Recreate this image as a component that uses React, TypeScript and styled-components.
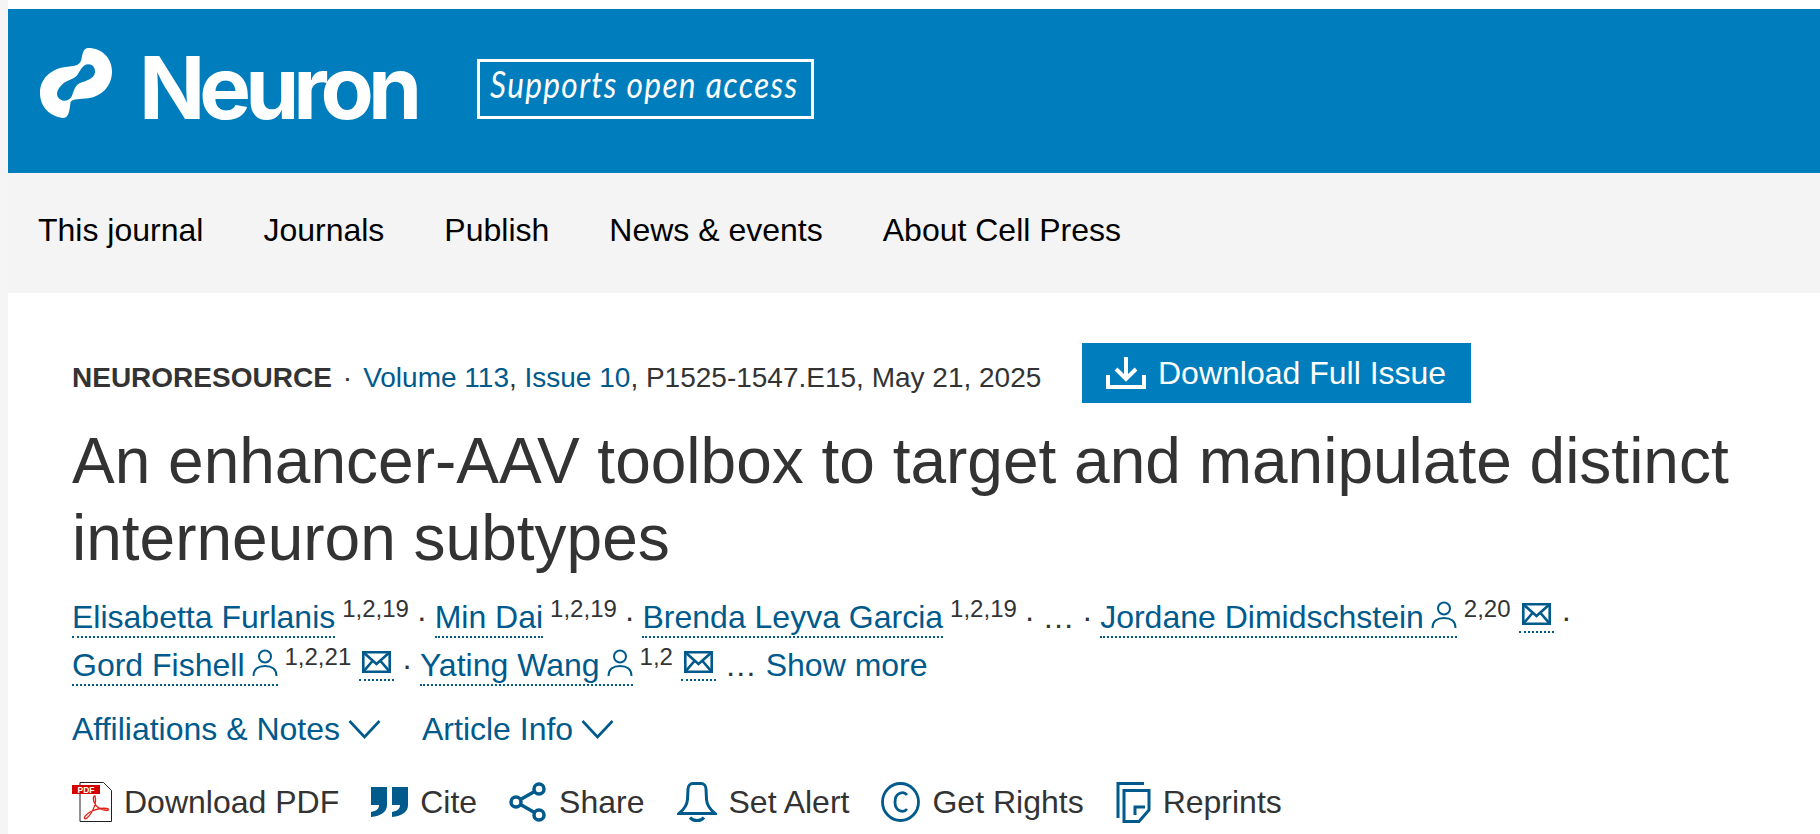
import React, { FC, ReactNode } from "react";
import styled, { createGlobalStyle } from "styled-components";

const Colors = {
  BRAND: "#007dbc",
  LINK: "#005a8c",
  TEXT: "#333333",
  NAV: "#f4f4f4"
};

const GlobalStyle = createGlobalStyle`
  html, body {
    margin: 0;
    padding: 0;
    background: #ffffff;
  }
  body {
    font-family: "Liberation Sans", Arial, sans-serif;
    color: ${Colors.TEXT};
  }
`;

const Page = styled.div`
  width: 1820px;
  height: 834px;
  box-sizing: border-box;
  overflow: hidden;
  padding: 9px 0 0 8px;
  background: linear-gradient(to right, #f5f5f5 8px, #ffffff 8px);
`;

const Masthead = styled.header`
  height: 164px;
  background: ${Colors.BRAND};
  display: flex;
  align-items: flex-start;
  padding: 39px 0 0 32px;
  box-sizing: border-box;
`;

const LogoLink = styled.a`
  display: flex;
  align-items: flex-start;
  color: #ffffff;
  text-decoration: none;
  width: 437px;
  height: 78px;
  flex-shrink: 0;
`;

const LogoText = styled.span`
  font-family: "Inter", "Liberation Sans", sans-serif;
  font-size: 87px;
  font-weight: 700;
  letter-spacing: -6px;
  line-height: 78px;
  margin: 1px 0 0 27px;
`;

const OpenAccess = styled.div`
  box-sizing: border-box;
  width: 337px;
  height: 60px;
  margin-top: 11px;
  border: 3px solid #ffffff;
  color: #ffffff;
  display: flex;
  justify-content: center;
  white-space: nowrap;
`;

const OpenAccessText = styled.span`
  font-family: "Lato", sans-serif;
  font-style: italic;
  font-size: 36px;
  letter-spacing: 1.5px;
  line-height: 44px;
  transform: translateX(-1px) scaleX(0.88);
`;

const NavBar = styled.nav`
  height: 120px;
  box-sizing: border-box;
  padding: 0 0 6px 30px;
  background: ${Colors.NAV};
  display: flex;
  align-items: center;
  gap: 60px;
`;

const NavLink = styled.a`
  color: #000000;
  font-size: 32px;
  text-decoration: none;
  white-space: nowrap;
`;

const Main = styled.main`
  padding: 50px 72px 0 64px;
`;

const MetaRow = styled.div`
  display: flex;
  align-items: flex-start;
  height: 60px;
`;

const MetaText = styled.div`
  font-size: 28px;
  line-height: 30px;
  padding-top: 20px;
  width: 1010px;
  white-space: nowrap;
`;

const ArticleType = styled.span`
  font-weight: 700;
`;

const MetaDot = styled.span`
  margin: 0 11px;
`;

const PlainLink = styled.a`
  color: ${Colors.LINK};
  text-decoration: none;
`;

const DownloadButton = styled.a`
  box-sizing: border-box;
  width: 389px;
  height: 60px;
  background: ${Colors.BRAND};
  color: #ffffff;
  display: flex;
  align-items: center;
  gap: 12px;
  padding-left: 24px;
  font-size: 32px;
  white-space: nowrap;
`;

const Title = styled.h1`
  margin: 20px 0 0;
  font-size: 64px;
  font-weight: 400;
  line-height: 77px;
  color: ${Colors.TEXT};
`;

const Authors = styled.div`
  margin-top: 16px;
  font-size: 32px;
  line-height: 48px;
`;

const AuthorLink = styled.a`
  color: ${Colors.LINK};
  text-decoration: none;
  white-space: nowrap;
  border-bottom: 2px dotted ${Colors.LINK};
  padding-bottom: 1px;
`;

const MailLink = styled.a`
  display: inline-block;
  vertical-align: -5px;
  margin-left: 8px;
  padding: 0 3px 6px;
  border-bottom: 2px dotted ${Colors.LINK};
`;

const Sup = styled.sup`
  font-size: 24px;
  line-height: 0;
  margin-left: 7px;
  vertical-align: 11px;
`;

const Sep = styled.span`
  margin: 0 7.5px;
`;

const PersonGlyph = styled.svg`
  margin-left: 7px;
  vertical-align: baseline;
`;

const MailGlyph = styled.svg`
  display: block;
`;

const Toggles = styled.div`
  display: flex;
  gap: 41px;
  margin-top: 20px;
  font-size: 32px;
  line-height: 40px;
  color: ${Colors.LINK};
`;

const Toggle = styled.span`
  display: flex;
  align-items: center;
  gap: 8px;
`;

const Actions = styled.div`
  display: flex;
  align-items: center;
  margin-top: 32px;
  gap: 32px;
  font-size: 32px;
  line-height: 42px;
`;

const Action = styled.span`
  display: flex;
  align-items: center;
  gap: 12px;
  white-space: nowrap;
`;

const PersonIcon: FC = () => (
  <PersonGlyph width="26" height="27" viewBox="0 0 26 27" fill="none" stroke={Colors.LINK} strokeWidth="2">
    <circle cx="13" cy="7.5" r="6" />
    <path d="M1.500 27c0-7 5-10 11.500-10s11.500 3 11.500 10" />
  </PersonGlyph>
);

const MailIcon: FC = () => (
  <MailGlyph width="29" height="22" viewBox="0 0 29 22" fill="none" stroke={Colors.LINK} strokeWidth="2.600">
    <path d="M1.300 1.300h26.400v19.400H1.300z" />
    <path d="M1.300 1.300L14.500 13L27.700 1.300M1.300 20.700L10.500 10M27.700 20.700L18.500 10" />
  </MailGlyph>
);

const Chevron: FC = () => (
  <svg width="33" height="20" viewBox="0 0 33 20" fill="none" stroke={Colors.LINK} strokeWidth="2.600">
    <path d="M1.500 2L16.500 18L31.500 2" />
  </svg>
);

const DownloadIcon: FC = () => (
  <svg width="40" height="32" viewBox="0 0 40 32" fill="none" stroke="#ffffff" strokeWidth="4">
    <path d="M20 0v21M10 12l10 10 10-10" />
    <path d="M2 18v12h36V18" />
  </svg>
);

const PdfIcon: FC = () => (
  <svg width="40" height="40" viewBox="0 0 40 40" fill="none">
    <path d="M8 .5h23.500l8 8V39.500H8z" fill="#ffffff" stroke="#222222" strokeWidth="1" />
    <rect x="0" y="3" width="28" height="9" fill="#d40000" />
    <text x="14" y="10.500" fontSize="8.500" fontWeight="700" fill="#ffffff" textAnchor="middle" fontFamily="Liberation Sans">
      PDF
    </text>
    <path
      d="M23 14c-2 0-2 3-1 6 2 5 6 8 13 8.500 2 0 2-2 0-2-6-1-12 1-17 3.500-3 2-6 5-5.500 6.500 1 1 4-1 7-6 3-5 5-11 3.500-16.500z"
      stroke="#e2231a"
      strokeWidth="1.300"
    />
  </svg>
);

const CiteIcon: FC = () => (
  <svg width="37" height="30" viewBox="0 0 37 30" fill={Colors.LINK}>
    <path d="M0 0h16v18c0 7-6 11-16 12v-5c5-1 8-3 8-7H0z" />
    <path d="M21 0h16v18c0 7-6 11-16 12v-5c5-1 8-3 8-7h-8z" />
  </svg>
);

const ShareIcon: FC = () => (
  <svg width="38" height="40" viewBox="0 0 38 40" fill="none" stroke={Colors.LINK} strokeWidth="3.500">
    <circle cx="7" cy="20" r="5" />
    <circle cx="30" cy="7" r="5" />
    <circle cx="30" cy="33" r="5" />
    <path d="M11.500 17.500L25.500 9.500M11.500 22.500L25.500 30.500" />
  </svg>
);

const BellIcon: FC = () => (
  <svg width="40" height="41" viewBox="0 0 40 41" fill="none" stroke={Colors.LINK} strokeWidth="3">
    <path d="M2 31.500c5-4 8-8 8.500-14L11 7c0-3 2-5.500 5-5.500h8c3 0 5 2.500 5 5.500l.5 10.500c.5 6 3.500 10 8.500 14z" />
    <path d="M13 35.500c3 4 11 4 14 0" />
  </svg>
);

const CopyrightIcon: FC = () => (
  <svg width="39" height="40" viewBox="0 0 39 40" fill="none" stroke={Colors.LINK} strokeWidth="2.800">
    <ellipse cx="19.500" cy="20" rx="18" ry="18.500" />
    <path d="M26 13c-3-4-12-3-12 7s9 11 12 7" />
  </svg>
);

const ReprintsIcon: FC = () => (
  <svg width="35" height="41" viewBox="0 0 35 41" fill="none" stroke={Colors.LINK} strokeWidth="3">
    <path d="M2 36V1.500H28" />
    <path d="M8 8.500H33V28L23 39.500H8z" />
    <path d="M19 33V25H29" />
  </svg>
);

const NAV_ITEMS = ["This journal", "Journals", "Publish", "News & events", "About Cell Press"];

const ACTIONS: { label: string; icon: ReactNode }[] = [
  { label: "Download PDF", icon: <PdfIcon /> },
  { label: "Cite", icon: <CiteIcon /> },
  { label: "Share", icon: <ShareIcon /> },
  { label: "Set Alert", icon: <BellIcon /> },
  { label: "Get Rights", icon: <CopyrightIcon /> },
  { label: "Reprints", icon: <ReprintsIcon /> }
];

const App: FC = () => {
  return (
    <Page>
      <GlobalStyle />
      <Masthead>
        <LogoLink>
          <svg width="72" height="70" viewBox="60 55 216 210" fill="#ffffff">
            <path
              fillRule="evenodd"
              d="M205 55C245 55 276 85 276 125C276 170 245 200 205 206C180 209 160 208 152 216C148 240 148 265 128 265C90 260 60 232 60 190C60 145 95 118 135 112C160 108 178 110 184 90C188 72 190 55 205 55ZM205 104C188 104 182 122 172 136C162 150 140 150 126 165C112 178 108 192 114 203C124 218 148 216 156 198C162 182 166 166 180 160C196 154 222 150 225 128C226 114 218 104 205 104Z"
            />
          </svg>
          <LogoText>Neuron</LogoText>
        </LogoLink>
        <OpenAccess>
          <OpenAccessText>Supports open access</OpenAccessText>
        </OpenAccess>
      </Masthead>
      <NavBar>
        {NAV_ITEMS.map((item) => (
          <NavLink key={item}>{item}</NavLink>
        ))}
      </NavBar>
      <Main>
        <MetaRow>
          <MetaText>
            <ArticleType>NEURORESOURCE</ArticleType>
            <MetaDot>·</MetaDot>
            <PlainLink>Volume 113</PlainLink>, <PlainLink>Issue 10</PlainLink>, P1525-1547.E15, May 21, 2025
          </MetaText>
          <DownloadButton>
            <DownloadIcon />
            Download Full Issue
          </DownloadButton>
        </MetaRow>
        <Title>An enhancer-AAV toolbox to target and manipulate distinct interneuron subtypes</Title>
        <Authors>
          <AuthorLink>Elisabetta Furlanis</AuthorLink>
          <Sup>1,2,19</Sup>
          <Sep>·</Sep>
          <AuthorLink>Min Dai</AuthorLink>
          <Sup>1,2,19</Sup>
          <Sep>·</Sep>
          <AuthorLink>Brenda Leyva Garcia</AuthorLink>
          <Sup>1,2,19</Sup>
          <Sep>·</Sep>…<Sep>·</Sep>
          <AuthorLink>
            Jordane Dimidschstein
            <PersonIcon />
          </AuthorLink>
          <Sup>2,20</Sup>
          <MailLink>
            <MailIcon />
          </MailLink>
          <Sep>·</Sep>{" "}
          <AuthorLink>
            Gord Fishell
            <PersonIcon />
          </AuthorLink>
          <Sup>1,2,21</Sup>
          <MailLink>
            <MailIcon />
          </MailLink>
          <Sep>·</Sep>
          <AuthorLink>
            Yating Wang
            <PersonIcon />
          </AuthorLink>
          <Sup>1,2</Sup>
          <MailLink>
            <MailIcon />
          </MailLink>{" "}
          … <PlainLink>Show more</PlainLink>
        </Authors>
        <Toggles>
          <Toggle>
            Affiliations &amp; Notes
            <Chevron />
          </Toggle>
          <Toggle>
            Article Info
            <Chevron />
          </Toggle>
        </Toggles>
        <Actions>
          {ACTIONS.map(({ label, icon }) => (
            <Action key={label}>
              {icon}
              {label}
            </Action>
          ))}
        </Actions>
      </Main>
    </Page>
  );
};

export default App;
